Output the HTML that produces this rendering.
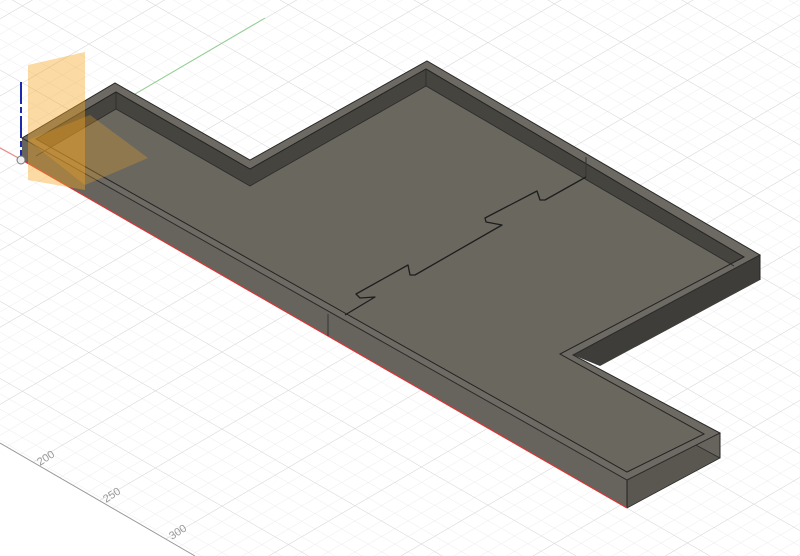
<!DOCTYPE html>
<html><head><meta charset="utf-8"><style>
html,body{margin:0;padding:0;background:#fff;width:800px;height:556px;overflow:hidden}
svg{display:block}
text{font-family:"Liberation Sans",sans-serif;font-size:11px;fill:#999}
</style></head><body>
<svg width="800" height="556" viewBox="0 0 800 556" xmlns="http://www.w3.org/2000/svg">
<defs>
<pattern id="minor" patternUnits="userSpaceOnUse" width="20" height="20" patternTransform="matrix(0.665 0.383 0.665 -0.388 22 160)">
<path d="M0 0H20M0 0V20" stroke="#ebebeb" stroke-width="1.4" fill="none"/>
</pattern>
<pattern id="major" patternUnits="userSpaceOnUse" width="100" height="100" patternTransform="matrix(0.665 0.383 0.665 -0.388 22 160)">
<path d="M0 0H100M0 0V100" stroke="#d4d4d4" stroke-width="1.4" fill="none"/>
</pattern>
<clipPath id="gclip"><polygon points="0,0 800,0 800,556 195,556 0,443"/></clipPath>
<clipPath id="iclip"><polygon points="36,139 116,92 250,169 426,69 744,257 560,354 704,434 627,472"/></clipPath>
</defs>
<g clip-path="url(#gclip)">
<rect width="800" height="556" fill="url(#minor)"/>
<rect width="800" height="556" fill="url(#major)"/>
</g>
<line x1="0" y1="443" x2="195" y2="556" stroke="#999" stroke-width="1"/>
<line x1="22" y1="160" x2="265" y2="18" stroke="#8fd08f" stroke-width="1"/>
<line x1="0" y1="148" x2="22" y2="160" stroke="#e88" stroke-width="1"/>
<text transform="translate(40,466) rotate(-33)">200</text>
<text transform="translate(106,503) rotate(-33)">250</text>
<text transform="translate(172,540) rotate(-33)">300</text>
<!-- side faces -->
<polygon points="22,138 22,160 627,508 627,480" fill="#67645d"/>
<polygon points="627,480 627,508 720,458 720,433" fill="#5a5751"/>
<polygon points="573,355 573,378 720,458 720,433" fill="#67645d"/>
<polygon points="250,160 250,183 427,86 427,62" fill="#57544f"/>
<polygon points="760,255 760,280 600,366 573,355" fill="#3f3d39"/>
<line x1="250" y1="160" x2="250" y2="183" stroke="#222" stroke-width="1"/>
<line x1="627" y1="480" x2="627" y2="508" stroke="#222" stroke-width="1"/>
<line x1="573" y1="355" x2="573" y2="378" stroke="#222" stroke-width="1"/>
<line x1="720" y1="433" x2="720" y2="458" stroke="#222" stroke-width="1"/>
<line x1="760" y1="255" x2="760" y2="280" stroke="#222" stroke-width="1"/>
<polyline points="573,378 627,408 720,458 627,508" fill="none" stroke="#2a2a2a" stroke-width="0.8"/>
<line x1="22" y1="160" x2="627" y2="508" stroke="#d33" stroke-width="1.2"/>
<line x1="250" y1="183" x2="427" y2="86" stroke="#2a2a2a" stroke-width="0.8"/>
<line x1="328" y1="314" x2="328" y2="336" stroke="#333" stroke-width="1"/>
<!-- wall top -->
<polygon points="22,138 115,83 250,160 427,61 760,255 573,355 720,433 627,480" fill="#6d6a63" stroke="#2a2a2a" stroke-width="1"/>
<!-- inner -->
<polygon points="36,139 116,92 250,169 426,69 744,257 560,354 704,434 627,472" fill="#46443f"/>
<g clip-path="url(#iclip)">
<polygon points="36,156 116,109 250,186 426,86 734,266 744,257 760,260 760,520 20,520 20,150" fill="#6a675f"/>
</g>
<polygon points="36,139 116,92 250,169 426,69 744,257 560,354 704,434 627,472" fill="none" stroke="#222" stroke-width="1"/>
<polyline points="36,156 116,109 250,186 426,86 734,266" fill="none" stroke="#2a2a2a" stroke-width="0.8"/>
<line x1="116" y1="92" x2="116" y2="109" stroke="#2a2a2a" stroke-width="0.8"/>
<line x1="426" y1="69" x2="426" y2="86" stroke="#2a2a2a" stroke-width="0.8"/>
<line x1="586" y1="157" x2="586" y2="177" stroke="#333" stroke-width="1"/>
<!-- seam -->
<polyline points="345,315 375,297 360,298 356,294 408,265 410,275 415,275 502,225 486,222 485,218 537,191 540,200 545,200 586,177" fill="none" stroke="#1e1e1e" stroke-width="1.3" stroke-linejoin="round"/>
<!-- orange planes -->
<polygon points="28,65 85,52 85,190 28,180" fill="#f5a623" fill-opacity="0.42"/>
<polygon points="28,140 90,115 148,158 85,185" fill="#f5a623" fill-opacity="0.28"/>
<line x1="21" y1="82" x2="21" y2="160" stroke="#1a2ab0" stroke-width="2" stroke-dasharray="22 3 6 3"/>
<circle cx="21" cy="160" r="4" fill="#eee" stroke="#777" stroke-width="1"/>
</svg>
</body></html>
